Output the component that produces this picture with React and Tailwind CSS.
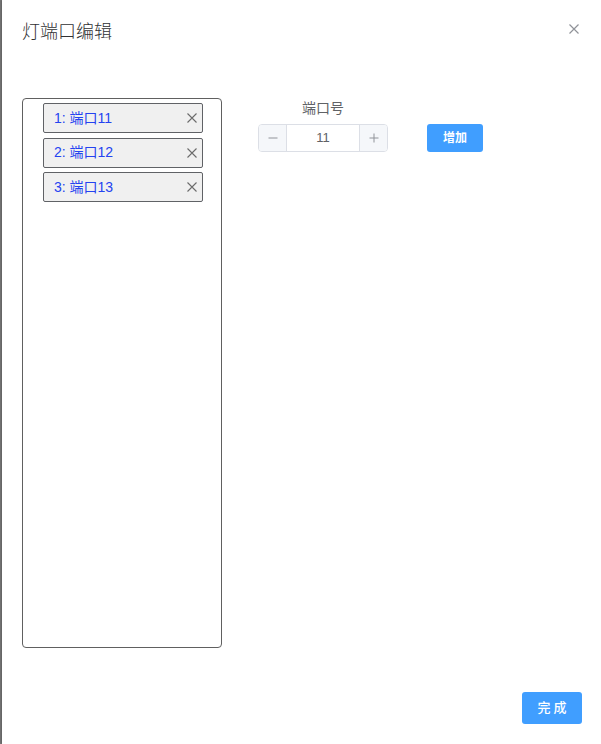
import React from "react";

const ports = [
  { id: 1, name: "端口11" },
  { id: 2, name: "端口12" },
  { id: 3, name: "端口13" }
];

const font = "font-['Liberation_Sans','Noto_Sans_CJK_SC',sans-serif]";

function CloseIcon({ size = 10, color = "#909399", width = 1.2 }) {
  return (
    <svg width={size} height={size} viewBox="0 0 10 10" aria-hidden="true">
      <path d="M0.5 0.5 L9.5 9.5 M9.5 0.5 L0.5 9.5" stroke={color} strokeWidth={width} fill="none" />
    </svg>
  );
}

function Sign({ plus }) {
  return (
    <svg width="10" height="10" viewBox="0 0 10 10" aria-hidden="true">
      <path d={plus ? "M0.5 5 H9.5 M5 0.5 V9.5" : "M0.5 5 H9.5"} stroke="#909399" strokeWidth="1" fill="none" />
    </svg>
  );
}

export default function App() {
  return (
    <div className={`flex h-[744px] w-[601px] overflow-hidden bg-white ${font}`}>
      <div className="w-[2px] shrink-0 bg-[#7b7b7b]" />
      <div className="relative flex flex-1 flex-col bg-white shadow-[-1px_0_2px_rgba(0,0,0,0.25)]">
        <header className="h-[98px] pl-[20px] pt-[20px]">
          <h1 className="text-[18px] font-light leading-[24px] text-[#303133]">灯端口编辑</h1>
          <button className="absolute right-[22px] top-[24px]" aria-label="关闭">
            <CloseIcon />
          </button>
        </header>

        <div className="flex pl-[20px]">
          <div className="h-[550px] w-[200px] rounded-[4px] border border-[#606060] pl-[20px] pt-[4px]">
            <div className="flex flex-col gap-[4.5px]">
              {ports.map((p) => (
                <div
                  key={p.id}
                  className="flex h-[30px] w-[160px] items-center justify-between rounded-[2px] border border-[#606266] bg-[#f0f0f0] pl-[10px] pr-[5px]"
                >
                  <span className="text-[14px] text-[#2443f0]">
                    {p.id}: {p.name}
                  </span>
                  <CloseIcon size={10} color="#6b6b6b" width={1.1} />
                </div>
              ))}
            </div>
          </div>

          <div className="ml-[36px] flex w-[130px] flex-col items-center">
            <div className="h-[20px] text-[14px] leading-[20px] text-[#606266]">端口号</div>
            <div className="mt-[6px] flex h-[28px] w-[130px] overflow-hidden rounded-[4px] border border-[#dcdfe6] text-[13px]">
              <span className="flex w-[28px] items-center justify-center border-r border-[#dcdfe6] bg-[#f5f7fa]">
                <Sign />
              </span>
              <span className="flex flex-1 items-center justify-center text-[#606266]">11</span>
              <span className="flex w-[28px] items-center justify-center border-l border-[#dcdfe6] bg-[#f5f7fa]">
                <Sign plus />
              </span>
            </div>
          </div>

          <div className="ml-[39px] pt-[26px]">
            <button className="h-[28px] w-[56px] rounded-[3px] bg-[#409eff] text-[12px] font-bold text-white">增加</button>
          </div>
        </div>

        <footer className="mt-[44px] flex justify-end pr-[19px]">
          <button className="h-[32px] w-[60px] rounded-[3px] bg-[#409eff] pl-[3px] text-[13px] font-medium tracking-[3px] text-white">
            完成
          </button>
        </footer>
      </div>
    </div>
  );
}
